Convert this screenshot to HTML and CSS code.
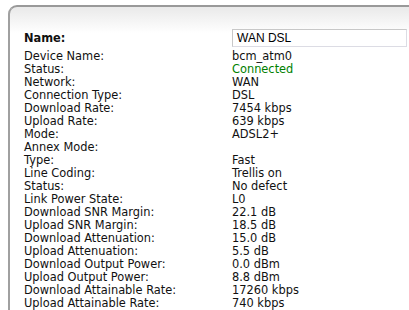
FILE: index.html
```html
<!DOCTYPE html>
<html>
<head>
<meta charset="utf-8">
<link rel="stylesheet" href="styles.css">
</head>
<body>
<div class="panel">
  <div class="grid">
    <div class="label name-label">Name:</div>
    <div class="value name-value"><div class="input">WAN DSL</div></div>
    <div class="label">Device Name:</div><div class="value">bcm_atm0</div>
    <div class="label">Status:</div><div class="value ok">Connected</div>
    <div class="label">Network:</div><div class="value">WAN</div>
    <div class="label">Connection Type:</div><div class="value">DSL</div>
    <div class="label">Download Rate:</div><div class="value">7454 kbps</div>
    <div class="label">Upload Rate:</div><div class="value">639 kbps</div>
    <div class="label">Mode:</div><div class="value">ADSL2+</div>
    <div class="label">Annex Mode:</div><div class="value"></div>
    <div class="label">Type:</div><div class="value">Fast</div>
    <div class="label">Line Coding:</div><div class="value">Trellis on</div>
    <div class="label">Status:</div><div class="value">No defect</div>
    <div class="label">Link Power State:</div><div class="value">L0</div>
    <div class="label">Download SNR Margin:</div><div class="value">22.1 dB</div>
    <div class="label">Upload SNR Margin:</div><div class="value">18.5 dB</div>
    <div class="label">Download Attenuation:</div><div class="value">15.0 dB</div>
    <div class="label">Upload Attenuation:</div><div class="value">5.5 dB</div>
    <div class="label">Download Output Power:</div><div class="value">0.0 dBm</div>
    <div class="label">Upload Output Power:</div><div class="value">8.8 dBm</div>
    <div class="label">Download Attainable Rate:</div><div class="value">17260 kbps</div>
    <div class="label">Upload Attainable Rate:</div><div class="value">740 kbps</div>
  </div>
</div>
</body>
</html>
```
FILE: styles.css
```css
html, body {
  margin: 0;
  padding: 0;
  background: #fff;
  overflow: hidden;
  height: 310px;
}
body {
  box-sizing: border-box;
  padding: 5px 0 0 8px;
  font-family: "DejaVu Sans", Verdana, sans-serif;
  font-size: 11.4px;
  color: #111;
}
.panel {
  box-sizing: border-box;
  height: 305px;
  border-top: 2px solid #999;
  border-left: 2px solid #a0a0a0;
  border-top-left-radius: 9px;
  background: linear-gradient(#e9e9e9 0, #fff 26px);
  padding: 22px 0 0 14px;
  overflow: hidden;
}
.grid {
  display: grid;
  grid-template-columns: 208px 1fr;
  grid-template-rows: 21px;
  grid-auto-rows: 13px;
  line-height: 13px;
}
.name-label {
  font-weight: bold;
  line-height: 19px;
}
.input {
  box-sizing: border-box;
  height: 18px;
  margin-right: 2px;
  border: 1px solid #c8c8c8;
  border-bottom-color: #dcdce4;
  border-right-color: #dcdce4;
  background: #fff;
  padding: 0 4px;
  line-height: 16px;
  font-family: "Liberation Sans", Arial, sans-serif;
  font-size: 12px;
  color: #000;
}
.ok {
  color: #008000;
}
```
